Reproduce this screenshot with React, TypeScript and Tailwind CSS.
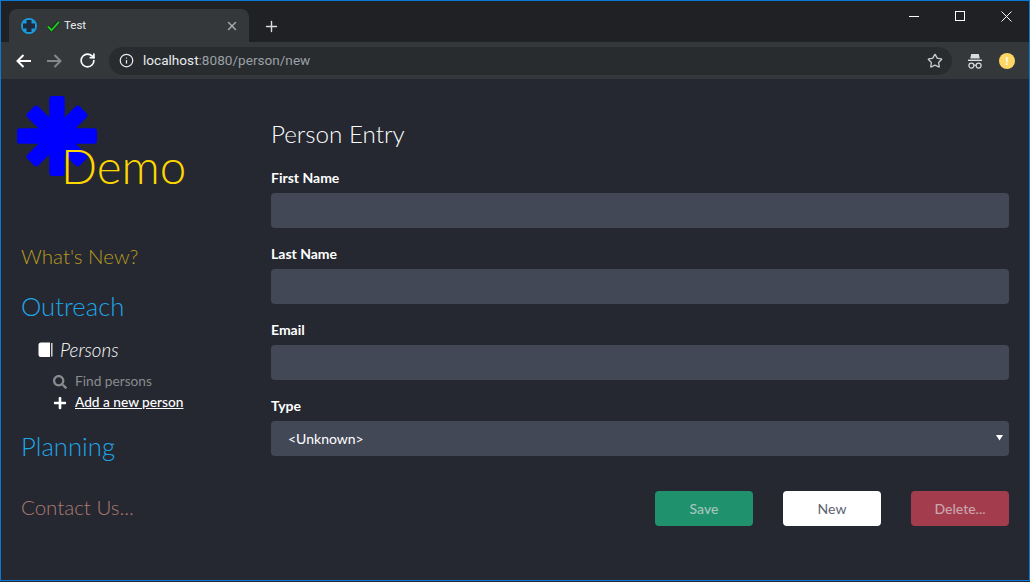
import React from "react";
import { FaSearch, FaPlus } from "react-icons/fa";
import { Plus, Star, Info, RotateCw, X } from "lucide-react";

function Asterisk() {
  return (
    <svg width="80" height="80" viewBox="0 0 80 80" className="block">
      <g fill="#0000ff">
        <rect x="32.3" y="0" width="15.4" height="80" rx="3" />
        <rect x="0" y="32.3" width="80" height="15.4" rx="3" />
        <rect x="32.3" y="3" width="15.4" height="74" rx="3" transform="rotate(45 40 40)" />
        <rect x="32.3" y="3" width="15.4" height="74" rx="3" transform="rotate(-45 40 40)" />
      </g>
    </svg>
  );
}

function Field({ label, select }: { label: string; select?: boolean }) {
  return (
    <div className="mb-[14px]">
      <div className="h-[24px] text-[14px] font-bold leading-[24px] text-white">{label}</div>
      <div className="relative mt-[3px] flex h-[35px] items-center rounded-[4px] bg-[#434857] pl-[17px] text-[14px] text-white">
        {select ? "<Unknown>" : null}
        {select ? <span className="absolute right-[6px] top-[13px] text-[0px] leading-none"><svg width="7" height="7" viewBox="0 0 7 7"><path d="M0 1h7L3.5 6.5z" fill="#fff" /></svg></span> : null}
      </div>
    </div>
  );
}

function Incognito() {
  return (
    <svg width="16" height="16" viewBox="0 0 16 16" fill="none" className="block">
      <path d="M4.2 1h7.6l1 4.6H3.2z" fill="#dadce0" />
      <rect x="1" y="6.6" width="14" height="1.4" fill="#dadce0" />
      <circle cx="4.4" cy="12.6" r="2.5" stroke="#dadce0" strokeWidth="1.2" />
      <circle cx="11.6" cy="12.6" r="2.5" stroke="#dadce0" strokeWidth="1.2" />
      <path d="M6.8 12.2h2.4" stroke="#dadce0" strokeWidth="1.1" />
    </svg>
  );
}

function FavIcon() {
  return (
    <svg width="16" height="16" viewBox="0 0 16 16" className="block shrink-0">
      <circle cx="8" cy="8" r="8" fill="#1a9bdc" />
      <path d="M5.5 2h5v3.5H14v5h-3.5V14h-5v-3.5H2v-5h3.5z" fill="#1f2a3c" />
    </svg>
  );
}

function Tick() {
  return (
    <svg width="13" height="12" viewBox="0 0 13 12" className="ml-[10px] block shrink-0">
      <path d="M1 6.5l3.5 3.8L12 1.8" fill="none" stroke="#16291a" strokeWidth="3.6" />
      <path d="M1 6.5l3.5 3.8L12 1.8" fill="none" stroke="#22c522" strokeWidth="2" />
    </svg>
  );
}

function Arrow({ color, flip }: { color: string; flip?: boolean }) {
  return (
    <svg width="15" height="14" viewBox="0 0 15 14" className={flip ? "block shrink-0 -scale-x-100" : "block shrink-0"}>
      <path d="M15 7H1.5M7.5 1L1.5 7l6 6" fill="none" stroke={color} strokeWidth="2" />
    </svg>
  );
}

function Book() {
  return (
    <svg width="15" height="16" viewBox="0 0 15 16" className="block shrink-0">
      <path d="M3 0.5h9v14.5H3A2.5 2.5 0 0 1 .5 12.5V3A2.5 2.5 0 0 1 3 .5z" fill="#fff" />
      <path d="M13 1h1.6v13.6H13z" fill="#c9c9c9" />
    </svg>
  );
}

export default function App() {
  return (
    <div className="flex h-[582px] w-[1030px] flex-col overflow-hidden bg-[#252830]" style={{ fontFamily: "Lato, sans-serif" }}>
      <div className="flex h-[581px] flex-col border border-[#0a7ad6]">
        {/* Title bar */}
        <div className="flex h-[41px] shrink-0 bg-[#202124] pl-[8px] pt-[8px]">
          <div className="flex h-[33px] w-[240px] items-center rounded-t-[8px] bg-[#35383b] pl-[12px] pr-[10px]" style={{ fontFamily: "Roboto, sans-serif" }}>
            <FavIcon />
            <Tick />
            <span className="ml-[4px] text-[11.5px] text-[#e8eaed]">Test</span>
            <X size={14} strokeWidth={2.4} className="ml-auto text-[#a8abaf]" />
          </div>
          <Plus size={17} strokeWidth={2} className="ml-[14px] mt-[9px] text-[#dadce0]" />
          <div className="ml-auto flex h-[33px] -translate-y-[8px]">
            <div className="flex h-[30px] w-[46px] items-center justify-center"><div className="h-[1px] w-[10px] bg-white" /></div>
            <div className="flex h-[30px] w-[46px] items-center justify-center"><div className="h-[10px] w-[10px] border border-white" /></div>
            <div className="flex h-[30px] w-[46px] items-center justify-center">
              <svg width="11" height="11" viewBox="0 0 11 11" className="block"><path d="M.5.5l10 10M10.5.5l-10 10" stroke="#fff" strokeWidth="1" /></svg>
            </div>
          </div>
        </div>
        {/* Toolbar */}
        <div className="flex h-[37px] shrink-0 items-center bg-[#35383b] pl-[15px]">
          <Arrow color="#ffffff" />
          <div className="ml-[16px]"><Arrow color="#85878a" flip /></div>
          <RotateCw size={17} strokeWidth={2.4} className="ml-[17px] shrink-0 text-white" />
          <div className="ml-[13px] flex h-[28px] w-[843px] shrink-0 items-center rounded-full bg-[#292c2f] pl-[10px] pr-[9px]" style={{ fontFamily: "Roboto, sans-serif" }}>
            <Info size={15} strokeWidth={2} className="text-[#e8eaed]" />
            <span className="ml-[9px] text-[13.6px] text-[#e8eaed]">localhost</span>
            <span className="text-[13.6px] text-[#9aa0a6]">:8080/person/new</span>
            <Star size={16} strokeWidth={2} className="ml-auto text-[#c8cacd]" />
          </div>
          <div className="ml-[15px]"><Incognito /></div>
          <div className="ml-[16px] flex h-[16px] w-[16px] items-center justify-center rounded-full bg-[#fdd663] text-[12px] font-bold leading-none text-white">!</div>
        </div>
        {/* Page */}
        <div className="flex min-h-0 flex-1">
          <aside className="w-[270px] shrink-0 pl-[16px] pt-[17px]">
            <div className="relative h-[80px]">
              <Asterisk />
              <div className="absolute left-[44px] top-[37px] text-[47.5px] font-light leading-[1.4] text-[#ffd700]">Demo</div>
            </div>
            <nav className="pl-[4px]">
              <div className="mt-[65px] h-[30px] text-[20.5px] font-light leading-[30px] text-[#b89a20]">What's New?</div>
              <div className="mt-[17px] h-[36px] text-[25.7px] font-light leading-[36px] text-[#1fa6e8]">Outreach</div>
              <div className="mt-[13px] flex h-[26px] items-center pl-[17px]">
                <Book />
                <span className="ml-[7px] text-[18.8px] font-light italic text-white">Persons</span>
              </div>
              <div className="mt-[8px] flex h-[21px] items-center pl-[32px] text-[13.7px] text-[#8a8b8f]">
                <FaSearch size={14} className="shrink-0 text-[#8a8b8f]" />
                <span className="ml-[8px]">Find persons</span>
              </div>
              <div className="flex h-[21px] items-center pl-[32px] text-[13.7px] font-medium text-white">
                <FaPlus size={14} className="shrink-0" />
                <span className="ml-[8px] underline">Add a new person</span>
              </div>
              <div className="mt-[15px] h-[36px] text-[25.7px] font-light leading-[36px] text-[#1fa6e8]">Planning</div>
              <div className="mt-[28px] h-[30px] text-[20.5px] font-light leading-[30px] text-[#ad7a72]">Contact Us...</div>
            </nav>
          </aside>
          <main className="w-[738px] pt-[37px]">
            <h1 className="h-[36px] text-[24.2px] font-light leading-[36px] text-white">Person Entry</h1>
            <div className="mt-[14px]">
              <Field label="First Name" />
              <Field label="Last Name" />
              <Field label="Email" />
              <Field label="Type" select />
            </div>
            <div className="mt-[35px] flex justify-end gap-[30px] text-[14px]">
              <button className="h-[35px] w-[98px] rounded-[4px] bg-[#1f916d] font-medium text-[#a5c6b9]">Save</button>
              <button className="h-[35px] w-[98px] rounded-[4px] bg-white text-[#5c6270]">New</button>
              <button className="h-[35px] w-[98px] rounded-[4px] bg-[#a33c4c] font-medium text-[#c9a5ac]">Delete...</button>
            </div>
          </main>
        </div>
      </div>
    </div>
  );
}
